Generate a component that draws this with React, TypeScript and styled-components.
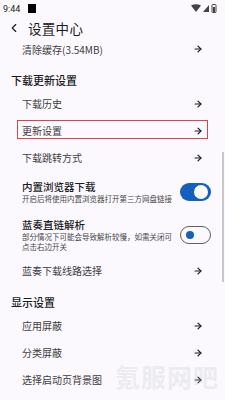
import React from "react";
import styled, { createGlobalStyle } from "styled-components";
import { ArrowRight, ChevronLeft } from "lucide-react";

const GlobalStyle = createGlobalStyle`
  html, body {
    margin: 0;
    padding: 0;
    background: #fbf9fd;
  }
  body {
    font-family: "Noto Sans CJK SC", "Noto Sans", sans-serif;
    color: #1c1b1f;
  }
`;

interface NavItem {
  label: string;
  marked?: boolean;
}

interface ToggleItem {
  title: string;
  sub: string[];
  on: boolean;
}

const downloadItems: NavItem[] = [
  { label: "下载历史" },
  { label: "更新设置", marked: true },
  { label: "下载跳转方式" },
];

const toggles: ToggleItem[] = [
  { title: "内置浏览器下载", sub: ["开启后将使用内置浏览器打开第三方网盘链接"], on: true },
  { title: "蓝奏直链解析", sub: ["部分情况下可能会导致解析较慢，如需关闭可", "点击右边开关"], on: false },
];

const displayItems: NavItem[] = [
  { label: "应用屏蔽" },
  { label: "分类屏蔽" },
  { label: "选择启动页背景图" },
];

const StatusIcons = () => (
  <svg width="26" height="9" viewBox="0 0 26 9">
    <path d="M0 1.5 Q5 -1 10 1.5 L5 8 Z" fill="#444" />
    <path d="M12 8 L18 1 L18 8 Z" fill="#444" />
    <rect x="21" y="0.5" width="4" height="8" rx="0.8" fill="none" stroke="#444" strokeWidth="1" />
    <rect x="22" y="3" width="2" height="5" fill="#444" />
  </svg>
);

const Row = ({ item }: { item: NavItem }) => (
  <NavRow>
    {item.marked && <Mark />}
    <NavLabel>{item.label}</NavLabel>
    <ArrowRight size={10} strokeWidth={2.8} color="#1c1b1f" />
  </NavRow>
);

const App = () => {
  return (
    <Page>
      <GlobalStyle />
      <StatusBar>
        <Time>9:44</Time>
        <Block />
        <Spacer />
        <StatusIcons />
      </StatusBar>
      <Header>
        <ChevronLeft size={14} strokeWidth={2} color="#1c1b1f" />
        <Title>设置中心</Title>
      </Header>
      <CacheRow>
        <NavLabel>清除缓存(3.54MB)</NavLabel>
        <ArrowRight size={10} strokeWidth={2.8} color="#1c1b1f" />
      </CacheRow>

      <SectionTitle $top={11}>下载更新设置</SectionTitle>
      {downloadItems.map((el) => (
        <Row key={el.label} item={el} />
      ))}
      {toggles.map((t) => (
        <ToggleRow key={t.title}>
          <ToggleText>
            <ToggleTitle>{t.title}</ToggleTitle>
            {t.sub.map((line) => (
              <ToggleSub key={line}>{line}</ToggleSub>
            ))}
          </ToggleText>
          <Switch $on={t.on}>
            <Knob $on={t.on} />
          </Switch>
        </ToggleRow>
      ))}
      <Row item={{ label: "蓝奏下载线路选择" }} />

      <SectionTitle $top={8}>显示设置</SectionTitle>
      {displayItems.map((el) => (
        <Row key={el.label} item={el} />
      ))}

      <ScrollThumb />
      <Watermark>氪服网吧</Watermark>
    </Page>
  );
};

export default App;

const Page = styled.div`
  position: relative;
  width: 225px;
  height: 400px;
  overflow: hidden;
  background: #fbf9fd;
`;

const StatusBar = styled.div`
  display: flex;
  align-items: center;
  height: 17px;
  padding: 0 8px 0 3px;
`;

const Time = styled.span`
  font-family: "Roboto", "Noto Sans", sans-serif;
  font-size: 9px;
  color: #222;
`;

const Block = styled.span`
  width: 8px;
  height: 9px;
  background: #000;
  margin-left: 8px;
`;

const Spacer = styled.div`
  flex: 1;
`;

const Header = styled.div`
  display: flex;
  align-items: center;
  height: 22px;
  padding-left: 7px;
  gap: 7px;
`;

const Title = styled.h1`
  margin: 0;
  font-size: 13.5px;
  font-weight: 400;
  letter-spacing: 0.3px;
  color: #1c1b1f;
`;

const NavRow = styled.div`
  position: relative;
  display: flex;
  align-items: center;
  height: 27px;
  padding: 0 22px;
`;

const CacheRow = styled(NavRow)`
  height: 20px;
`;

const NavLabel = styled.span`
  flex: 1;
  font-size: 10px;
  color: #3e3d42;
`;

const Mark = styled.div`
  position: absolute;
  left: 17px;
  right: 17px;
  top: 3px;
  bottom: 5px;
  border: 1px solid #d8434c;
`;

const SectionTitle = styled.div<{ $top: number }>`
  margin-top: ${(p) => p.$top}px;
  height: 20px;
  line-height: 20px;
  padding-left: 11px;
  font-size: 11px;
  font-weight: 500;
  color: #1c1b1f;
`;

const ToggleRow = styled.div`
  display: flex;
  align-items: center;
  padding: 9px 22px 5px 22px;
  gap: 8px;
`;

const ToggleText = styled.div`
  flex: 1;
  display: flex;
  flex-direction: column;
`;

const ToggleTitle = styled.div`
  font-size: 10.5px;
  line-height: 14px;
  font-weight: 500;
  color: #1c1b1f;
`;

const ToggleSub = styled.div`
  font-size: 7.5px;
  line-height: 10px;
  color: #48474c;
  white-space: nowrap;
`;

const Switch = styled.div<{ $on: boolean }>`
  position: relative;
  box-sizing: border-box;
  width: 31px;
  height: 18px;
  flex-shrink: 0;
  border-radius: 9px;
  background: ${(p) => (p.$on ? "#155fbf" : "#fbf9fd")};
  border: ${(p) => (p.$on ? "none" : "1.5px solid #5f5d64")};
`;

const Knob = styled.div<{ $on: boolean }>`
  position: absolute;
  top: 50%;
  transform: translateY(-50%);
  border-radius: 50%;
  background: ${(p) => (p.$on ? "#fff" : "#155fbf")};
  width: ${(p) => (p.$on ? 14 : 8)}px;
  height: ${(p) => (p.$on ? 14 : 8)}px;
  left: ${(p) => (p.$on ? 14 : 5)}px;
`;

const ScrollThumb = styled.div`
  position: absolute;
  right: 1px;
  top: 152px;
  width: 2px;
  height: 130px;
  background: #c8c7cc;
`;

const Watermark = styled.div`
  position: absolute;
  right: 6px;
  bottom: 6px;
  font-size: 25px;
  font-weight: 700;
  color: rgba(200, 200, 205, 0.3);
  letter-spacing: 1px;
`;
